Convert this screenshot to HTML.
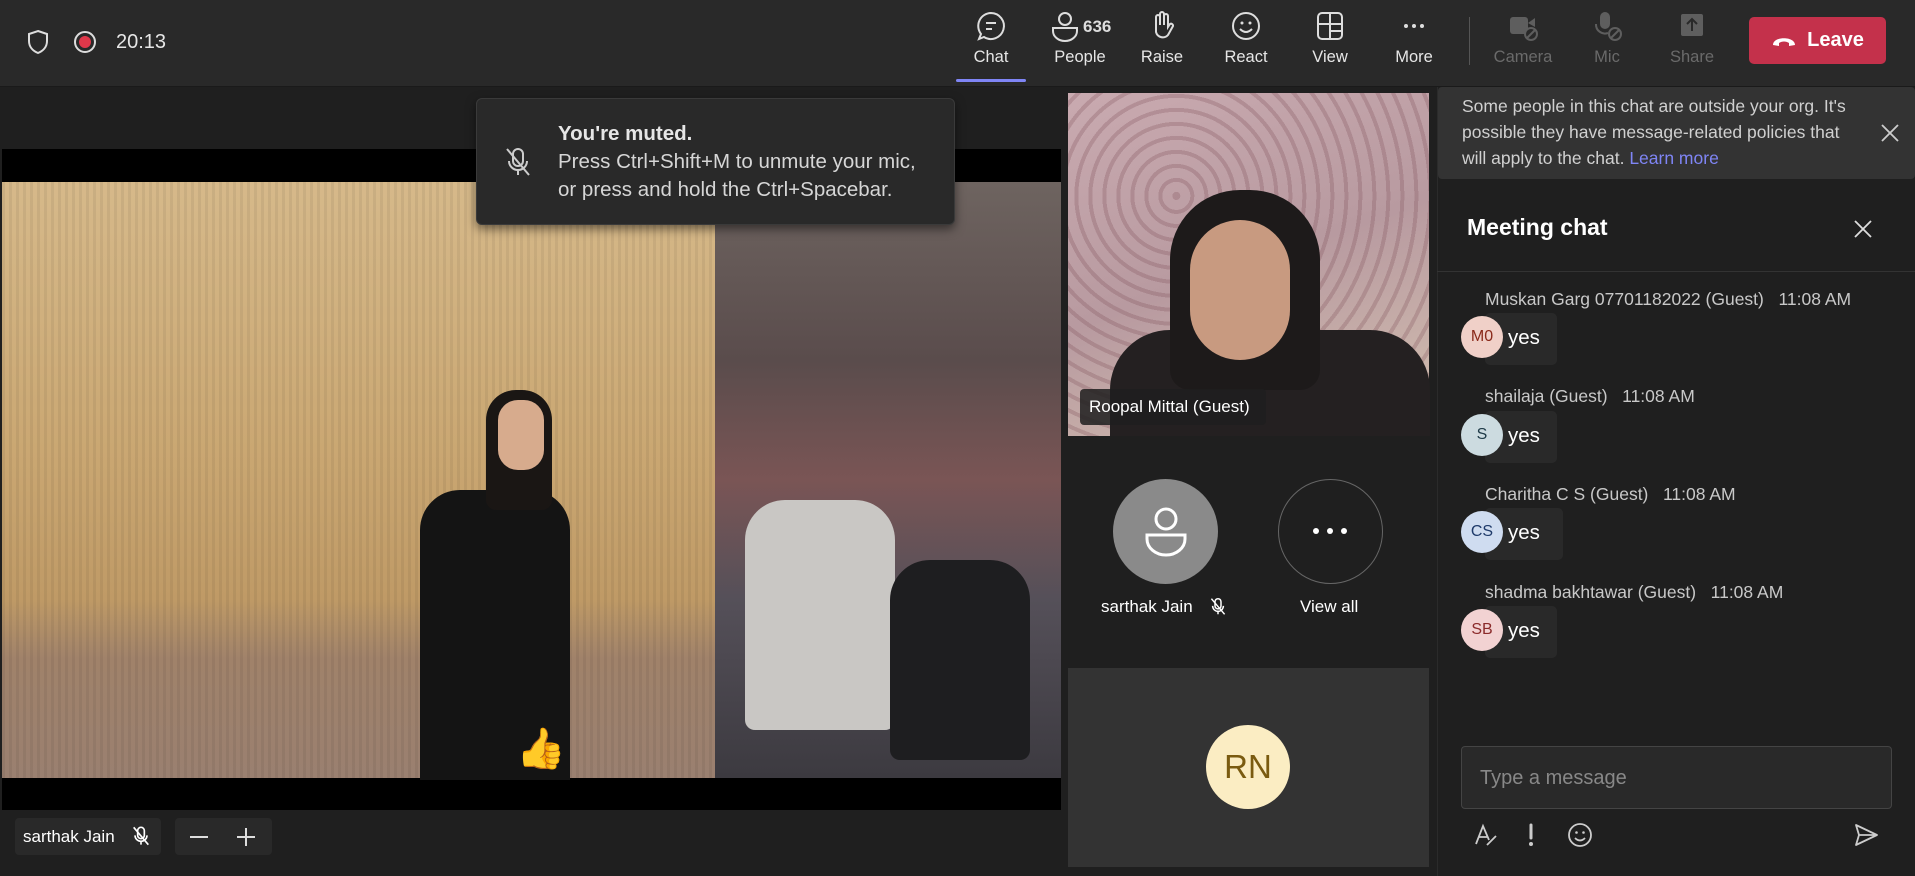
<!DOCTYPE html>
<html><head><meta charset="utf-8"><style>
*{box-sizing:border-box;margin:0;padding:0}
body{width:1915px;height:876px;background:#1f1f1f;font-family:"Liberation Sans",sans-serif;color:#fff;position:relative;overflow:hidden}
.a{position:absolute}
.top{left:0;top:0;width:1915px;height:87px;background:#292929;border-bottom:1px solid #1a1a1a}
.tb{position:absolute;top:10px;width:70px;text-align:center;font-size:16.5px;color:#e6e6e6}
.tb svg{display:block;margin:0 auto 6px}
.dis{color:#6a6a6a}
.msgname{position:absolute;left:1485px;font-size:17.5px;color:#c8c8c8}
.bub{position:absolute;left:1485px;width:72px;height:52px;background:#292929;border-radius:5px}
.av{position:absolute;left:1461px;width:42px;height:42px;border-radius:50%;font-size:16px;display:flex;align-items:center;justify-content:center}
.yes{position:absolute;left:1508px;font-size:20.5px;color:#fff}
</style></head><body>
<div class="a top">
 <svg class="a" style="left:26px;top:29px" width="24" height="26" viewBox="0 0 24 26"><path d="M12 2 L21 5 V12 C21 18 17 22 12 24 C7 22 3 18 3 12 V5 Z" fill="none" stroke="#ddd" stroke-width="2"/></svg>
 <div class="a" style="left:74px;top:31px;width:22px;height:22px;border-radius:50%;border:2px solid #ddd"></div>
 <div class="a" style="left:79px;top:36px;width:12px;height:12px;border-radius:50%;background:#e0384a"></div>
 <div class="a" style="left:116px;top:31px;font-size:20px;color:#e6e6e6">20:13</div>

 <div class="tb" style="left:956px"><svg width="32" height="32" viewBox="0 0 32 32"><path d="M16 3a13 13 0 1 1-7 24l-5 2 2-5A13 13 0 0 1 16 3z" fill="none" stroke="#ddd" stroke-width="2"/><path d="M11 13h10M11 19h6" stroke="#ddd" stroke-width="2"/></svg>Chat</div>
 <div class="a" style="left:956px;top:79px;width:70px;height:3px;background:#7f85f5;border-radius:2px"></div>
 <div class="tb" style="left:1040px;width:80px"><svg width="70" height="32" viewBox="0 0 70 32"><circle cx="20" cy="9" r="6" fill="none" stroke="#ddd" stroke-width="2"/><path d="M8 18h24v3a12 10 0 0 1-24 0z" fill="none" stroke="#ddd" stroke-width="2"/><text x="38" y="22" font-size="17" font-weight="bold" fill="#ddd" font-family="Liberation Sans">636</text></svg>People</div>
 <div class="tb" style="left:1127px"><svg width="32" height="32" viewBox="0 0 32 32"><path d="M10 18V7a2 2 0 0 1 4 0v8V4a2 2 0 0 1 4 0v11V6a2 2 0 0 1 4 0v11l2-3a2 2 0 0 1 3 2l-5 9a7 7 0 0 1-12-3z" fill="none" stroke="#ddd" stroke-width="2"/></svg>Raise</div>
 <div class="tb" style="left:1211px"><svg width="32" height="32" viewBox="0 0 32 32"><circle cx="16" cy="16" r="13" fill="none" stroke="#ddd" stroke-width="2"/><circle cx="12" cy="13" r="1.5" fill="#ddd"/><circle cx="20" cy="13" r="1.5" fill="#ddd"/><path d="M10 19q6 6 12 0" fill="none" stroke="#ddd" stroke-width="2"/></svg>React</div>
 <div class="tb" style="left:1295px"><svg width="32" height="32" viewBox="0 0 32 32"><rect x="4" y="3" width="24" height="26" rx="4" fill="none" stroke="#ddd" stroke-width="2"/><path d="M16 3v26M4 14h24M16 21h12" stroke="#ddd" stroke-width="2"/></svg>View</div>
 <div class="tb" style="left:1379px"><svg width="32" height="32" viewBox="0 0 32 32"><circle cx="8" cy="16" r="2" fill="#ddd"/><circle cx="16" cy="16" r="2" fill="#ddd"/><circle cx="24" cy="16" r="2" fill="#ddd"/></svg>More</div>
 <div class="a" style="left:1469px;top:17px;width:1px;height:48px;background:#555"></div>
 <div class="tb dis" style="left:1488px"><svg width="32" height="32" viewBox="0 0 32 32"><rect x="3" y="7" width="18" height="17" rx="3" fill="#5e5e5e"/><path d="M21 13l7-5v9" fill="#5e5e5e"/><circle cx="24" cy="24" r="6" fill="#292929" stroke="#5e5e5e" stroke-width="2"/><path d="M20 28l8-8" stroke="#5e5e5e" stroke-width="2"/></svg>Camera</div>
 <div class="tb dis" style="left:1572px"><svg width="32" height="32" viewBox="0 0 32 32"><rect x="9" y="2" width="10" height="17" rx="5" fill="#5e5e5e"/><path d="M5 14a9 9 0 0 0 12 9" fill="none" stroke="#5e5e5e" stroke-width="2"/><circle cx="24" cy="24" r="6" fill="#292929" stroke="#5e5e5e" stroke-width="2"/><path d="M20 28l8-8" stroke="#5e5e5e" stroke-width="2"/></svg>Mic</div>
 <div class="tb dis" style="left:1657px"><svg width="32" height="32" viewBox="0 0 32 32"><rect x="5" y="4" width="22" height="22" rx="2" fill="#5e5e5e"/><path d="M16 21V9M11 14l5-5 5 5" fill="none" stroke="#292929" stroke-width="2"/></svg>Share</div>
 <div class="a" style="left:1749px;top:17px;width:137px;height:47px;background:#c4314b;border-radius:5px;display:flex;align-items:center;justify-content:center;font-size:20px;font-weight:bold;color:#fff"><svg width="26" height="14" viewBox="0 0 26 14" style="margin-right:10px"><path d="M2 11C2 2 24 2 24 11l-6 1v-3c-3-2-7-2-10 0v3z" fill="#fff"/></svg>Leave</div>
</div>

<!-- main video -->
<div class="a" style="left:2px;top:149px;width:1059px;height:661px;background:#000"></div>
<div class="a" style="left:2px;top:182px;width:1059px;height:596px;background:linear-gradient(180deg,#d6b98a 0%,#caa772 45%,#bf9a66 70%,#a0826a 80%,#9a8070 100%)"></div>
<div class="a" style="left:2px;top:182px;width:720px;height:596px;background:repeating-linear-gradient(90deg,rgba(0,0,0,0.06) 0 3px,transparent 3px 7px)"></div>
<div class="a" style="left:715px;top:182px;width:346px;height:596px;background:linear-gradient(180deg,#6e6460 0%,#5a4c4c 30%,#7a5555 50%,#555059 70%,#3c3a40 100%)"></div>
<div class="a" style="left:745px;top:500px;width:150px;height:230px;background:#c9c7c4;border-radius:40px 40px 10px 10px"></div>
<div class="a" style="left:890px;top:560px;width:140px;height:200px;background:#1e1e20;border-radius:40px 40px 10px 10px"></div>
<div class="a" style="left:420px;top:490px;width:150px;height:290px;background:#141414;border-radius:40px 40px 0 0"></div>
<div class="a" style="left:486px;top:390px;width:66px;height:120px;background:#1a1614;border-radius:30px 30px 10px 10px"></div>
<div class="a" style="left:498px;top:400px;width:46px;height:70px;background:#d7ab8d;border-radius:20px"></div>
<div class="a" style="left:516px;top:725px;font-size:40px">👍</div>

<!-- toast -->
<div class="a" style="left:476px;top:98px;width:479px;height:127px;background:#292929;border:1px solid #3a3a3a;border-radius:6px;box-shadow:0 4px 10px rgba(0,0,0,.5)"></div>
<svg class="a" style="left:503px;top:146px" width="30" height="32" viewBox="0 0 30 32"><rect x="10" y="3" width="10" height="17" rx="5" fill="none" stroke="#ccc" stroke-width="2"/><path d="M6 15a9 9 0 0 0 18 0M15 24v5M4 3l22 26" fill="none" stroke="#ccc" stroke-width="2"/></svg>
<div class="a" style="left:558px;top:120px;font-size:20.5px;line-height:28px;color:#d6d6d6"><b style="color:#e6e6e6">You're muted.</b><br>Press Ctrl+Shift+M to unmute your mic,<br>or press and hold the Ctrl+Spacebar.</div>

<!-- bottom-left -->
<div class="a" style="left:15px;top:818px;width:146px;height:37px;background:#292929;border-radius:4px"></div>
<div class="a" style="left:23px;top:827px;font-size:17px;color:#fff">sarthak Jain</div>
<svg class="a" style="left:131px;top:825px" width="20" height="22" viewBox="0 0 30 32"><rect x="10" y="3" width="10" height="17" rx="5" fill="none" stroke="#fff" stroke-width="2.5"/><path d="M6 15a9 9 0 0 0 18 0M15 24v5M4 3l22 26" fill="none" stroke="#fff" stroke-width="2.5"/></svg>
<div class="a" style="left:175px;top:818px;width:97px;height:37px;background:#292929;border-radius:4px"></div>
<div class="a" style="left:190px;top:836px;width:18px;height:2px;background:#ddd"></div>
<div class="a" style="left:237px;top:836px;width:18px;height:2px;background:#ddd"></div>
<div class="a" style="left:245px;top:828px;width:2px;height:18px;background:#ddd"></div>

<!-- right tiles -->
<div class="a" style="left:1068px;top:93px;width:361px;height:343px;background:linear-gradient(160deg,#c9aab0,#b89aa0 50%,#d3c0b0)"></div>
<div class="a" style="left:1068px;top:93px;width:361px;height:343px;background:repeating-radial-gradient(circle at 30% 30%,rgba(120,70,80,.25) 0 4px,transparent 4px 14px)"></div>
<div class="a" style="left:1110px;top:330px;width:320px;height:106px;background:#242021;border-radius:60px 60px 0 0"></div>
<div class="a" style="left:1170px;top:190px;width:150px;height:200px;background:#1d1a1a;border-radius:70px 70px 20px 20px"></div>
<div class="a" style="left:1190px;top:220px;width:100px;height:140px;background:#c89a80;border-radius:50px"></div>
<div class="a" style="left:1080px;top:389px;width:186px;height:36px;background:rgba(30,30,30,.85);border-radius:4px;font-size:17px;padding:8px 9px;color:#fff">Roopal Mittal (Guest)</div>

<div class="a" style="left:1113px;top:479px;width:105px;height:105px;border-radius:50%;background:#8a8a8a"></div>
<svg class="a" style="left:1141px;top:505px" width="50" height="54" viewBox="0 0 50 54"><circle cx="25" cy="14" r="10" fill="none" stroke="#fff" stroke-width="3"/><path d="M6 30h38v4a19 16 0 0 1-38 0z" fill="none" stroke="#fff" stroke-width="3"/></svg>
<div class="a" style="left:1101px;top:597px;font-size:17px;color:#fff">sarthak Jain</div>
<svg class="a" style="left:1209px;top:596px" width="18" height="21" viewBox="0 0 30 32"><rect x="10" y="3" width="10" height="17" rx="5" fill="none" stroke="#fff" stroke-width="2.5"/><path d="M6 15a9 9 0 0 0 18 0M15 24v5M4 3l22 26" fill="none" stroke="#fff" stroke-width="2.5"/></svg>
<div class="a" style="left:1278px;top:479px;width:105px;height:105px;border-radius:50%;background:#1f1f1f;border:1px solid #666"></div>
<div class="a" style="left:1313px;top:528px;width:6px;height:6px;border-radius:50%;background:#fff;box-shadow:14px 0 #fff,28px 0 #fff"></div>
<div class="a" style="left:1300px;top:597px;font-size:17px;color:#fff">View all</div>

<div class="a" style="left:1068px;top:668px;width:361px;height:199px;background:#333"></div>
<div class="a" style="left:1206px;top:725px;width:84px;height:84px;border-radius:50%;background:#fbedc3;color:#7a5b10;font-size:33px;display:flex;align-items:center;justify-content:center">RN</div>

<!-- chat panel -->
<div class="a" style="left:1437px;top:87px;width:478px;height:789px;background:#1f1f1f;border-left:1px solid #2b2b2b"></div>
<div class="a" style="left:1438px;top:87px;width:477px;height:92px;background:#333;border-radius:4px"></div>
<div class="a" style="left:1462px;top:93px;font-size:17.5px;line-height:26px;color:#d0d0d0">Some people in this chat are outside your org. It's<br>possible they have message-related policies that<br>will apply to the chat. <span style="color:#7f85f5">Learn more</span></div>
<svg class="a" style="left:1881px;top:124px" width="18" height="18" viewBox="0 0 18 18"><path d="M1 1l16 16M17 1L1 17" stroke="#ccc" stroke-width="1.8"/></svg>
<div class="a" style="left:1467px;top:214px;font-size:23px;font-weight:bold;color:#fff">Meeting chat</div>
<svg class="a" style="left:1854px;top:220px" width="18" height="18" viewBox="0 0 18 18"><path d="M1 1l16 16M17 1L1 17" stroke="#ddd" stroke-width="1.8"/></svg>
<div class="a" style="left:1437px;top:271px;width:478px;height:1px;background:#333"></div>

<div class="msgname" style="top:289px">Muskan Garg 07701182022 (Guest) &nbsp; 11:08 AM</div>
<div class="bub" style="top:313px"></div>
<div class="av" style="top:316px;background:#f0d0c8;color:#8a2a1a">M0</div>
<div class="yes" style="top:326px">yes</div>

<div class="msgname" style="top:386px">shailaja (Guest) &nbsp; 11:08 AM</div>
<div class="bub" style="top:411px"></div>
<div class="av" style="top:414px;background:#ccdbe0;color:#1e3a47">S</div>
<div class="yes" style="top:424px">yes</div>

<div class="msgname" style="top:484px">Charitha C S (Guest) &nbsp; 11:08 AM</div>
<div class="bub" style="top:508px;width:78px"></div>
<div class="av" style="top:511px;background:#cfdcf0;color:#1e3a6a">CS</div>
<div class="yes" style="top:521px">yes</div>

<div class="msgname" style="top:582px">shadma bakhtawar (Guest) &nbsp; 11:08 AM</div>
<div class="bub" style="top:606px"></div>
<div class="av" style="top:609px;background:#f2d2d2;color:#8a2a2a">SB</div>
<div class="yes" style="top:619px">yes</div>

<div class="a" style="left:1461px;top:746px;width:431px;height:63px;background:#292929;border:1px solid #444;border-radius:4px"></div>
<div class="a" style="left:1480px;top:767px;font-size:20px;color:#888">Type a message</div>
<svg class="a" style="left:1473px;top:822px" width="26" height="26" viewBox="0 0 26 26"><path d="M3 22L10 4l6 14M6 15h8M14 23l9-9" fill="none" stroke="#ccc" stroke-width="1.8"/></svg>
<svg class="a" style="left:1524px;top:822px" width="14" height="26" viewBox="0 0 14 26"><path d="M7 3v13" stroke="#ccc" stroke-width="3" stroke-linecap="round"/><circle cx="7" cy="22" r="2" fill="#ccc"/></svg>
<svg class="a" style="left:1567px;top:822px" width="26" height="26" viewBox="0 0 26 26"><circle cx="13" cy="13" r="11" fill="none" stroke="#ccc" stroke-width="1.8"/><circle cx="9.5" cy="10.5" r="1.3" fill="#ccc"/><circle cx="16.5" cy="10.5" r="1.3" fill="#ccc"/><path d="M8 16q5 5 10 0" fill="none" stroke="#ccc" stroke-width="1.8"/></svg>
<svg class="a" style="left:1853px;top:822px" width="26" height="26" viewBox="0 0 26 26"><path d="M3 3l21 10L3 23l3-10z M6 13h18" fill="none" stroke="#ccc" stroke-width="1.8" stroke-linejoin="round"/></svg>
</body></html>
